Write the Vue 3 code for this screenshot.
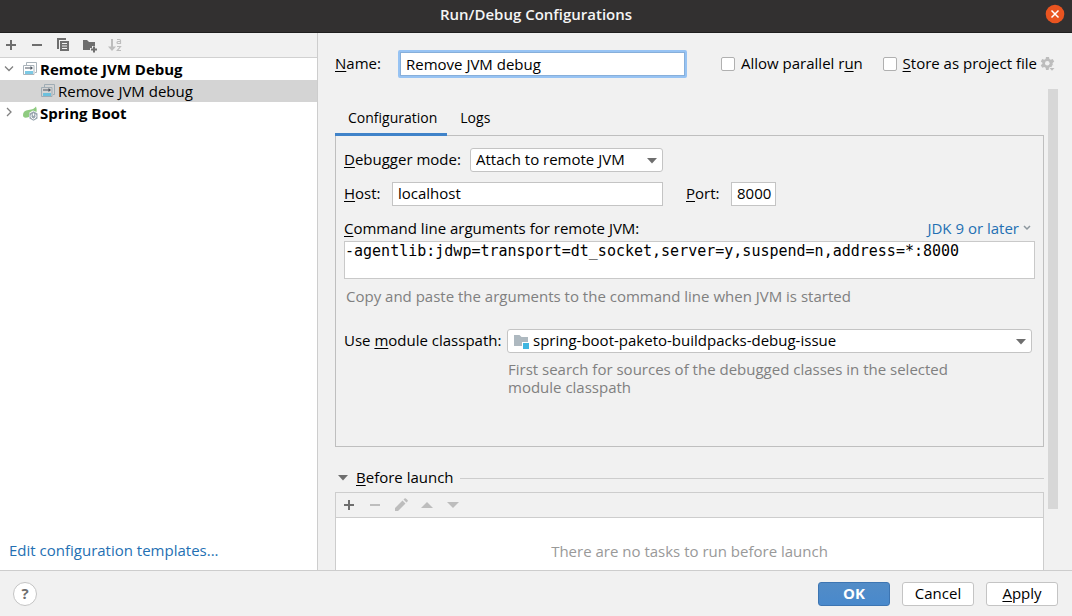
<script setup>
import { ref } from 'vue'

const name = ref('Remove JVM debug')
const allowParallel = ref(false)
const storeAsFile = ref(false)
const mode = ref('attach')
const host = ref('localhost')
const port = ref('8000')
const args = ref('-agentlib:jdwp=transport=dt_socket,server=y,suspend=n,address=*:8000')
const moduleName = ref('spring-boot-paketo-buildpacks-debug-issue')
const activeTab = ref('Configuration')
const tabs = ['Configuration', 'Logs']
</script>

<template>
  <div class="dialog">
    <header class="titlebar">
      <h1>Run/Debug Configurations</h1>
      <button class="close" type="button" aria-label="Close">
        <svg width="20" height="20" viewBox="0 0 20 20">
          <circle cx="10" cy="10" r="9.3" fill="#e95420" />
          <path d="M6.5 6.5l7 7M13.5 6.5l-7 7" stroke="#fff" stroke-width="1.5" fill="none" />
        </svg>
      </button>
    </header>

    <div class="body">
      <aside class="sidebar">
        <div class="toolbar side-tools">
          <button type="button" aria-label="Add">
            <svg viewBox="0 0 16 16"><path d="M8 3v10M3 8h10" stroke="#6e6e6e" stroke-width="2" /></svg>
          </button>
          <button type="button" aria-label="Remove">
            <svg viewBox="0 0 16 16"><path d="M3 8h10" stroke="#6e6e6e" stroke-width="2" /></svg>
          </button>
          <button type="button" aria-label="Copy">
            <svg viewBox="0 0 16 16">
              <path d="M2 1h9v2H4v9H2z" fill="#6e6e6e" />
              <path fill-rule="evenodd" d="M5 4h9v10H5zM7 6v1h5V6zM7 8.500v1h5v-1zM7 11v1h5v-1z" fill="#6e6e6e" />
            </svg>
          </button>
          <button type="button" aria-label="New folder">
            <svg class="spill" viewBox="0 0 16 16">
              <path d="M2 3h4l2 2h6v4h-3v2H9v2H2z" fill="#6e6e6e" />
              <path d="M13 9.500v6M10 12.500h6" stroke="#6e6e6e" stroke-width="2" />
            </svg>
          </button>
          <button type="button" aria-label="Sort configurations" disabled>
            <svg viewBox="0 0 16 16">
              <path d="M5 2v9" stroke="#bdbdbd" stroke-width="2" />
              <path d="M1 9.500h8l-4 4.500z" fill="#bdbdbd" />
              <path d="M10 2.500H12.500q1 0 1 1V7M13.500 4.500h-2.500q-1 0-1 1t1 1H13.500M10 9.500h3.500L10.300 13.500H14" stroke="#bdbdbd" stroke-width="1.200" fill="none" />
            </svg>
          </button>
        </div>
        <ul class="tree">
          <li class="row">
            <svg class="twisty" viewBox="0 0 16 16"><path d="M4 5.500l4 4 4-4" /></svg>
            <svg class="icon" viewBox="0 0 16 16">
              <path d="M4.500 4V1.500h10V11.500H13" fill="none" stroke="#aab4bb" />
              <path d="M1.500 4.500h10.500v9H1.500z" fill="#fff" stroke="#aab4bb" />
              <path d="M3 10h8v3H3z" fill="#7cc9e4" />
              <path d="M3 7h6" stroke="#4d5560" />
              <path d="M8.500 5L11 7 8.500 9z" fill="#4d5560" />
            </svg>
            <strong>Remote JVM Debug</strong>
          </li>
          <li class="row child selected">
            <svg class="icon" viewBox="0 0 16 16">
              <path d="M4.500 4V1.500h10V11.500H13" fill="none" stroke="#9facb5" />
              <path d="M1.500 4.500h10.500v9H1.500z" fill="#d4d4d4" stroke="#9facb5" />
              <path d="M3 10h8v3H3z" fill="#6cc0dd" />
              <path d="M3 7h6" stroke="#4d5560" />
              <path d="M8.500 5L11 7 8.500 9z" fill="#4d5560" />
            </svg>
            <span>Remove JVM debug</span>
          </li>
          <li class="row">
            <svg class="twisty" viewBox="0 0 16 16"><path d="M6 3l4 4-4 4" /></svg>
            <svg class="icon" viewBox="0 0 16 16">
              <path d="M14 1.500q1.200 3 .6 5.500L11 5.500 7.500 7.500 7 12Q1 14 1 10 1 5.500 6.500 5q5.500-.5 7.500-3.500z" fill="#8fcb80" />
              <path d="M11.500 6.300l4 2.300v4.800l-4 2.300-4-2.300V8.600z" fill="#9aa7b0" />
              <path d="M10 9.300a2.500 2.500 0 1 0 3 0M11.500 8.300v2.500" stroke="#fff" fill="none" />
            </svg>
            <strong>Spring Boot</strong>
          </li>
        </ul>
        <a class="link templates" href="#">Edit configuration templates...</a>
      </aside>

      <main class="editor">
        <div class="name-row">
          <label class="name-label" for="name"><u>N</u>ame:</label>
          <input id="name" v-model="name" class="name-input" type="text" />
          <label class="check parallel"><input v-model="allowParallel" type="checkbox" /><span>Allow parallel r<u>u</u>n</span></label>
          <label class="check"><input v-model="storeAsFile" type="checkbox" /><span><u>S</u>tore as project file</span></label>
          <button class="gear" type="button" aria-label="Storage options" disabled>
            <svg viewBox="0 0 16 16">
              <path d="M6 1h3l.4 2 1.300.8 2-.7 1.500 2.500-1.600 1.400v1.500l.9.800-1.500 0-.5 2-1.300-.4-1.200.8L8.600 14H6l-.4-2.200-1.400-.8-2 .7L.8 9.200l1.600-1.400V6.700L.8 5.400l1.400-2.400 2 .7L5.600 3z" fill="#bdbdbd" />
              <circle cx="7.300" cy="7.300" r="2.300" fill="#f1f1f1" />
              <path d="M9.500 12h5L12 14.800z" fill="#bdbdbd" />
            </svg>
          </button>
        </div>

        <div class="scroller">
          <div class="content">
            <div class="tabs" role="tablist">
              <button
                v-for="tab in tabs"
                :key="tab"
                type="button"
                role="tab"
                :aria-selected="activeTab === tab"
                :class="['tab', { active: activeTab === tab }]"
                @click="activeTab = tab"
              >{{ tab }}</button>
            </div>

            <section class="panel">
              <div class="field">
                <label class="mode-label" for="mode"><u>D</u>ebugger mode:</label>
                <span class="select mode">
                  <select id="mode" v-model="mode">
                    <option value="attach">Attach to remote JVM</option>
                    <option value="listen">Listen to remote JVM</option>
                  </select>
                  <svg class="arrow" viewBox="0 0 10 6"><path d="M0 0h10L5 5.500z" fill="#6e6e6e" /></svg>
                </span>
              </div>
              <div class="field">
                <label class="host-label" for="host"><u>H</u>ost:</label>
                <input id="host" v-model="host" class="host" type="text" />
                <label class="port-label" for="port"><u>P</u>ort:</label>
                <input id="port" v-model="port" class="port" type="text" />
              </div>
              <div class="args-head">
                <label for="args"><u>C</u>ommand line arguments for remote JVM:</label>
                <button class="link jdk" type="button">
                  JDK 9 or later
                  <svg viewBox="0 0 8 6"><path d="M1 1l3 3 3-3" fill="none" stroke="#8c969d" stroke-width="1.500" /></svg>
                </button>
              </div>
              <textarea id="args" v-model="args" class="args" rows="2" spellcheck="false"></textarea>
              <p class="hint copy-hint">Copy and paste the arguments to the command line when JVM is started</p>
              <div class="module">
                <label for="module">Use <u>m</u>odule classpath:</label>
                <span class="select">
                  <svg class="folder" viewBox="0 0 16 16">
                    <path d="M1 2h5.500L8.500 4H15v5H9v4H1z" fill="#aeb9c0" />
                    <path d="M10 10h6v6h-6z" fill="#40b6e0" />
                  </svg>
                  <select id="module" v-model="moduleName" class="with-icon">
                    <option>spring-boot-paketo-buildpacks-debug-issue</option>
                  </select>
                  <svg class="arrow" viewBox="0 0 10 6"><path d="M0 0h10L5 5.500z" fill="#6e6e6e" /></svg>
                </span>
                <p class="hint">First search for sources of the debugged classes in the selected<br />module classpath</p>
              </div>
            </section>

            <h2 class="before">
              <svg viewBox="0 0 10 6"><path d="M0 0h10L5 5.500z" fill="#6e6e6e" /></svg>
              <span><u>B</u>efore launch</span>
            </h2>
            <section class="tasks">
              <div class="toolbar task-tools">
                <button type="button" aria-label="Add task">
                  <svg viewBox="0 0 16 16"><path d="M8 3v10M3 8h10" stroke="#6e6e6e" stroke-width="2" /></svg>
                </button>
                <button type="button" aria-label="Remove task" disabled>
                  <svg viewBox="0 0 16 16"><path d="M3 8h10" stroke="#bdbdbd" stroke-width="2" /></svg>
                </button>
                <button type="button" aria-label="Edit task" disabled>
                  <svg viewBox="0 0 16 16"><path d="M2 11l7.500-7.500 3 3L5 14H2zM10.500 2.500l1-1q.7-.7 1.400 0l1.600 1.600q.7.7 0 1.400l-1 1z" fill="#bdbdbd" /></svg>
                </button>
                <button type="button" aria-label="Move up" disabled>
                  <svg viewBox="0 0 16 16"><path d="M2 11h12L8 5z" fill="#bdbdbd" /></svg>
                </button>
                <button type="button" aria-label="Move down" disabled>
                  <svg viewBox="0 0 16 16"><path d="M2 5h12l-6 6z" fill="#bdbdbd" /></svg>
                </button>
              </div>
              <p class="empty">There are no tasks to run before launch</p>
            </section>
          </div>
          <div class="track"><div class="thumb"></div></div>
        </div>
      </main>
    </div>

    <footer class="footer">
      <button class="help" type="button" aria-label="Help">?</button>
      <button class="btn primary" type="button">OK</button>
      <button class="btn" type="button">Cancel</button>
      <button class="btn" type="button"><span><u>A</u>pply</span></button>
    </footer>
  </div>
</template>

<style>
body {
  margin: 0;
}
</style>

<style scoped>
.dialog,
.dialog * {
  box-sizing: border-box;
}
.dialog {
  display: flex;
  flex-direction: column;
  min-height: 100vh;
  background: #f1f1f1;
  color: #000;
  font: 15px/18px "Open Sans", "Noto Sans", sans-serif;
}
button,
input,
select {
  margin: 0;
  color: inherit;
  font: inherit;
}
button {
  padding: 0;
  border: 0;
  background: none;
}
label {
  padding-bottom: 2px;
}
svg {
  display: block;
  flex: none;
}
p,
h1,
h2,
ul {
  margin: 0;
  padding: 0;
}
u {
  text-underline-offset: 2px;
  text-decoration-thickness: 1px;
  text-decoration-skip-ink: none;
}
.titlebar {
  position: relative;
  display: flex;
  align-items: center;
  justify-content: center;
  height: 33px;
  padding-bottom: 4px;
  border-bottom: 1px solid #1f1f1f;
  background: #323030;
  color: #f5f5f5;
}
.titlebar h1 {
  font-size: 15px;
  font-weight: 600;
}
.close {
  position: absolute;
  top: 4px;
  right: 7px;
}
.body {
  display: flex;
  flex: 1;
}
.sidebar {
  display: flex;
  flex-direction: column;
  width: 318px;
  flex: none;
  border-right: 1px solid #cdcdcd;
  background: #fff;
}
.toolbar {
  display: flex;
  align-items: center;
  gap: 10px;
  height: 25px;
  background: #f1f1f1;
}
.toolbar svg {
  width: 16px;
  height: 16px;
}
.toolbar .spill {
  overflow: visible;
}
.side-tools {
  padding-left: 3px;
  border-bottom: 1px solid #d1d1d1;
}
.tree {
  list-style: none;
}
.row {
  display: flex;
  align-items: center;
  height: 22px;
  padding-left: 1px;
}
.row.child {
  padding-left: 40px;
}
.row.selected {
  background: #d4d4d4;
}
.twisty {
  width: 16px;
  height: 16px;
  margin-right: 5px;
}
.twisty path {
  fill: none;
  stroke: #808080;
  stroke-width: 1.3;
}
.icon {
  width: 16px;
  height: 16px;
  margin-right: 2px;
}
.row strong {
  font-weight: 700;
}
.link {
  color: #2470b3;
  text-decoration: none;
}
.templates {
  margin: auto 9px 11px;
}
.editor {
  display: flex;
  flex: 1;
  flex-direction: column;
  min-width: 0;
  padding-left: 17px;
}
.name-row {
  display: flex;
  align-items: center;
  height: 56px;
  padding: 6px 16px 0 0;
}
.name-label {
  width: 63px;
}
.name-input {
  width: 289px;
  height: 28px;
  padding: 0 6px;
  border: 2px solid #97c3f3;
  outline: 0;
  box-shadow: inset 0 0 0 1px #87afda;
  border-radius: 2px;
  background: #fff;
}
.check {
  display: flex;
  align-items: center;
  gap: 6px;
  padding: 0;
  white-space: nowrap;
}
.check span {
  padding-bottom: 2px;
}
.check input {
  width: 14px;
  height: 14px;
  border: 1px solid #b0b0b0;
  border-radius: 2px;
  background: #fff;
  appearance: none;
}
.check input:checked {
  background: #4d89c9;
}
.parallel {
  margin: 0 auto 0 34px;
}
.gear {
  margin-left: 3px;
}
.gear svg {
  width: 16px;
  height: 16px;
}
.scroller {
  display: flex;
  flex: 1;
  padding-right: 14px;
}
.content {
  display: flex;
  flex: 1;
  flex-direction: column;
  min-width: 0;
}
.tabs {
  display: flex;
  height: 46px;
  padding-top: 12px;
}
.tab {
  height: 35px;
  padding: 2px 10px 0 13px;
  border-bottom: 3px solid transparent;
  font-size: 14px;
}
.tab.active {
  z-index: 1;
  border-bottom-color: #4083c9;
}
.panel {
  height: 312px;
  padding: 12px 8px;
  border: 1px solid #bfbfbf;
}
.field {
  display: flex;
  align-items: center;
  height: 24px;
  margin-bottom: 10px;
}
.mode-label {
  width: 126px;
}
.host-label {
  width: 48px;
}
.field input {
  height: 24px;
  padding: 0 0 2px 5px;
  border: 1px solid #c4c4c4;
  outline: 0;
  background: #fff;
}
.host {
  width: 271px;
}
.port-label {
  width: 45px;
  margin-left: 23px;
}
.port {
  width: 45px;
}
.select {
  position: relative;
  display: block;
  height: 24px;
}
.select.mode {
  width: 193px;
}
.select select {
  width: 100%;
  height: 24px;
  padding: 0 24px 2px 5px;
  border: 1px solid #c4c4c4;
  border-radius: 3px;
  outline: 0;
  background: #fff;
  line-height: 20px;
  appearance: none;
}
.select .with-icon {
  padding-left: 25px;
}
.arrow {
  position: absolute;
  top: 10px;
  right: 6px;
  width: 10px;
  height: 6px;
  pointer-events: none;
}
.folder {
  position: absolute;
  top: 4px;
  left: 6px;
  width: 16px;
  height: 16px;
}
.args-head {
  display: flex;
  align-items: center;
  justify-content: space-between;
  height: 25px;
  padding-bottom: 2px;
}
.args-head label {
  padding: 0;
}
.jdk {
  display: flex;
  align-items: center;
  gap: 4px;
  margin-right: 4px;
}
.jdk svg {
  width: 8px;
  height: 6px;
}
.args {
  display: block;
  width: 100%;
  height: 38px;
  padding: 0;
  border: 1px solid #c9c9c9;
  outline: 0;
  background: #fff;
  color: #000;
  font: 15px/18px "DejaVu Sans Mono", monospace;
  resize: none;
}
.hint {
  color: #808080;
}
.copy-hint {
  padding: 8px 2px 24px;
}
.module {
  display: grid;
  grid-template-columns: 163px 1fr;
  align-items: center;
  row-gap: 7px;
  padding-right: 3px;
}
.module .hint {
  grid-column: 2;
  padding-left: 1px;
}
.before {
  display: flex;
  align-items: center;
  height: 18px;
  margin: 22px 0 5px;
  padding-left: 3px;
  font-size: 15px;
  font-weight: 400;
}
.before span {
  padding-bottom: 2px;
}
.before svg {
  width: 10px;
  height: 6px;
  margin-right: 8px;
}
.before::after {
  flex: 1;
  height: 1px;
  margin-left: 6px;
  background: #cdcdcd;
  content: "";
}
.tasks {
  display: flex;
  flex: 1;
  flex-direction: column;
  border: 1px solid #cdcdcd;
  border-bottom: 0;
  background: #fff;
}
.task-tools {
  padding-left: 5px;
  border-bottom: 1px solid #cdcdcd;
}
.empty {
  padding: 24px 0 10px;
  color: #999;
  text-align: center;
}
.track {
  width: 10px;
  margin-left: 4px;
}
.thumb {
  height: 420px;
  background: #d7d7d7;
}
.footer {
  display: flex;
  align-items: center;
  gap: 12px;
  height: 46px;
  padding: 0 14px 0 13px;
  border-top: 1px solid #cdcdcd;
}
.help {
  width: 24px;
  height: 24px;
  margin-right: auto;
  padding-bottom: 2px;
  border: 1px solid #c4c4c4;
  border-radius: 50%;
  background: #fff;
  color: #6e6e6e;
  font-weight: 700;
}
.btn {
  width: 72px;
  height: 24px;
  padding-bottom: 2px;
  border: 1px solid #c4c4c4;
  border-radius: 3px;
  background: #fff;
}
.btn.primary {
  border-color: #3d75b2;
  background: linear-gradient(#528cc7, #4989cc);
  color: #fff;
  font-weight: 700;
}
</style>
